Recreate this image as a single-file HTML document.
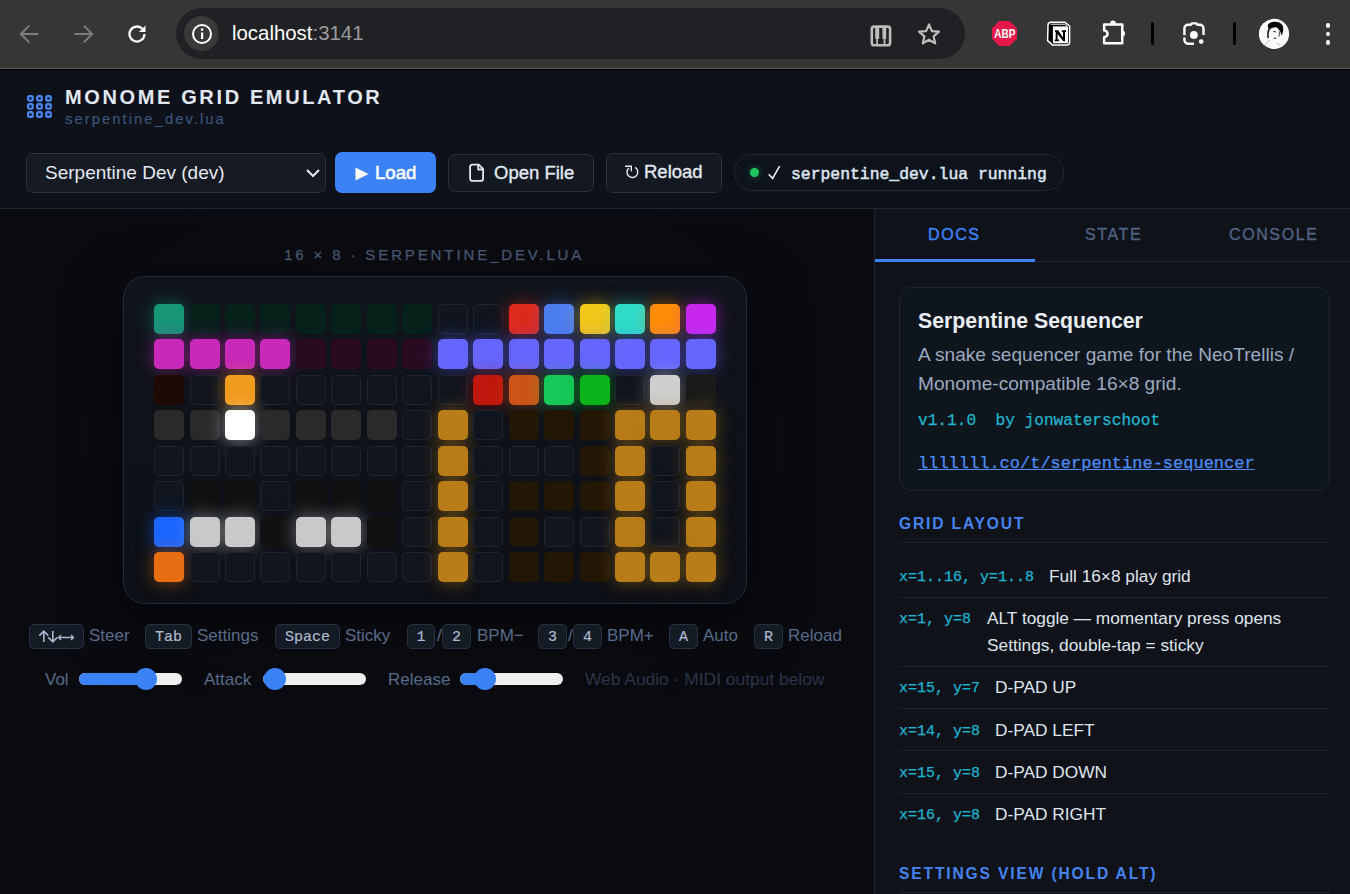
<!DOCTYPE html><html><head><meta charset="utf-8"><title>Monome Grid Emulator</title><style>
*{box-sizing:border-box;margin:0;padding:0}
html,body{width:1350px;height:894px;overflow:hidden;background:#08090d}
body{position:relative;font-family:"Liberation Sans",sans-serif;color:#e2e8f0}
.a{position:absolute}
.mono{font-family:"Liberation Mono",monospace}
.t{position:absolute;white-space:nowrap;line-height:1}
#chrome{position:absolute;left:0;top:0;width:1350px;height:68px;background:#363636}
#chline{position:absolute;left:0;top:68px;width:1350px;height:1px;background:#5e5e5e}
#chline2{position:absolute;left:0;top:69px;width:1350px;height:1px;background:#000}
#omni{position:absolute;left:176px;top:8px;width:789px;height:51px;border-radius:26px;background:#202124}
#header{position:absolute;left:0;top:70px;width:1350px;height:139px;background:#0e111a;border-bottom:1px solid #1d2431}
#left{position:absolute;left:0;top:209px;width:874px;height:685px;background:radial-gradient(ellipse 560px 460px at 434px 230px,#0c0e13 0%,#0a0b10 70%,#090b0f 100%)}
#right{position:absolute;left:874px;top:209px;width:476px;height:685px;background:#0f1219;border-left:1px solid #1d2431}
.btn{position:absolute;border-radius:7px}
.kbd{position:absolute;height:25px;top:624px;background:#151b25;border:1px solid #283142;border-radius:5px;font-family:"Liberation Mono",monospace;color:#adbacf;-webkit-text-stroke:0.2px #adbacf;font-size:15px;line-height:26px;text-align:center}
.klab{position:absolute;top:626px;font-size:17px;line-height:20px;color:#576b8a;white-space:nowrap}
.cell{position:absolute;width:30px;height:30px;border-radius:5px}
.e{background:#10151e;border:1px solid #1d2535}
</style></head><body>
<div id="chrome"></div><div id="chline"></div><div id="chline2"></div>
<svg class="a" style="left:18px;top:22px" width="24" height="24" viewBox="0 0 24 24"><path d="M20.5 12H3.5M11.2 3.6L2.8 12L11.2 20.4" fill="none" stroke="#7c7c7c" stroke-width="2"/></svg>
<svg class="a" style="left:71px;top:22px" width="24" height="24" viewBox="0 0 24 24"><path d="M3.5 12H20.5M12.8 3.6L21.2 12L12.8 20.4" fill="none" stroke="#7c7c7c" stroke-width="2"/></svg>
<svg class="a" style="left:125px;top:22px" width="24" height="24" viewBox="0 0 24 24"><path d="M19.5 12a7.5 7.5 0 1 1-2.2-5.3" fill="none" stroke="#fff" stroke-width="2.3"/><path d="M20.5 3.5v6.5h-6.5z" fill="#fff"/></svg>
<div id="omni"></div>
<div class="a" style="left:184px;top:16px;width:35px;height:35px;border-radius:50%;background:#393939"></div>
<svg class="a" style="left:191px;top:23px" width="22" height="22" viewBox="0 0 22 22"><circle cx="11" cy="11" r="9" fill="none" stroke="#fff" stroke-width="2"/><rect x="10" y="9.5" width="2.2" height="6.5" fill="#fff"/><circle cx="11.1" cy="6.6" r="1.3" fill="#fff"/></svg>
<div class="t" style="left:232px;top:23px;font-size:20.4px;color:#fff">localhost<span style="color:#9b9b9b">:3141</span></div>
<svg class="a" style="left:864px;top:18px" width="34" height="34" viewBox="0 0 34 34"><rect x="7.8" y="8.6" width="18.3" height="18.7" rx="2.4" fill="none" stroke="#bcbcbc" stroke-width="2.6"/><rect x="11.2" y="9" width="4" height="11.8" fill="#bcbcbc"/><rect x="18.4" y="9" width="3.8" height="11.8" fill="#bcbcbc"/><rect x="12.2" y="20" width="1.8" height="7" fill="#bcbcbc"/><rect x="19.6" y="20" width="1.8" height="7" fill="#bcbcbc"/></svg>
<svg class="a" style="left:917px;top:22px" width="24" height="24" viewBox="0 0 24 24"><path d="M12 2.5l2.9 6.6 7.1.6-5.4 4.7 1.6 7-6.2-3.7-6.2 3.7 1.6-7L2 9.7l7.1-.6z" fill="none" stroke="#bdbdbd" stroke-width="2.2" stroke-linejoin="round"/></svg>
<svg class="a" style="left:992px;top:21px" width="25" height="25" viewBox="0 0 25 25"><path d="M7.3 0h10.4l7.3 7.3v10.4l-7.3 7.3H7.3L0 17.7V7.3z" fill="#e5184a"/><text x="2.3" y="17" textLength="21" lengthAdjust="spacingAndGlyphs" font-family="Liberation Sans" font-weight="bold" font-size="12.4" fill="#fff">ABP</text></svg>
<svg class="a" style="left:1046px;top:21px" width="25" height="25" viewBox="0 0 25 25"><path d="M2 4.2Q2 1.2 5 1.2H18.6L23.6 5V21.6Q23.6 23.9 21.3 23.9H6.4L1.6 19.6z" fill="#000" stroke="#fff" stroke-width="1.5" stroke-linejoin="round"/><path d="M6.9 5.4H22.1V22.3H6.9z" fill="#fff"/><path d="M4.6 3.2H18.4L21 5" fill="none" stroke="#fff" stroke-width="1"/><path d="M9 9.3h3.2l4.8 7.2V11h-1.2V9.3h4.2V11h-1v9.3h-1.7L11.6 13v5.6h1.4v1.7H8.7v-1.7h1V11H9z" fill="#000"/></svg>
<svg class="a" style="left:1096px;top:16px" width="34" height="32" viewBox="0 0 34 32"><path d="M8.15 8.55H26.25V27.15H8.15V21.2a3.4 3.4 0 0 0 0-6.8z" fill="none" stroke="#fff" stroke-width="2.5" stroke-linejoin="round"/><path d="M14.2 9v-1.8a2.8 2.8 0 0 1 5.6 0V9z" fill="#fff"/><path d="M26 14.6a3 3 0 0 1 0 6z" fill="#fff"/></svg>
<div class="a" style="left:1151px;top:22px;width:3px;height:23px;border-radius:2px;background:#000"></div>
<svg class="a" style="left:1180px;top:16px" width="28" height="32" viewBox="0 0 28 32"><path d="M4.4 19.3V12.4a3.6 3.6 0 0 1 3.6-3.6H10.6l1.2-1.4h4.6l1.2 1.4h2.3a3.6 3.6 0 0 1 3.6 3.6V19.1" fill="none" stroke="#fff" stroke-width="2.4"/><path d="M4.4 21.6V24.1a3.6 3.6 0 0 0 3.6 3.6H14" fill="none" stroke="#fff" stroke-width="2.4"/><circle cx="13.9" cy="18.9" r="3.9" fill="#fff"/><circle cx="21.2" cy="25.6" r="2.3" fill="#fff"/></svg>
<div class="a" style="left:1233px;top:22px;width:3px;height:23px;border-radius:2px;background:#000"></div>
<svg class="a" style="left:1254px;top:14px" width="40" height="40" viewBox="0 0 40 40"><circle cx="20" cy="19.9" r="15.1" fill="#fbfbfb"/><path d="M13.6 11.5C15.5 6.8 25 6.3 28.3 11c1.8 2.8 1 7.2-.8 10.4-.6-2.4-1.4-4.4-2.6-5.6-.6-1.4-2.4-3-4.2-2.6-2.2.4-4.2 1.4-5.8 2.4z" fill="#0a0a0a"/><path d="M16.5 13.4c-1.8 1.4-2.4 4-2.6 6.5-.1 1.7.2 3.2.4 4.3" fill="none" stroke="#111" stroke-width="1.5"/><path d="M19.3 17.8c.9-.4 1.7-.3 2.4.1" stroke="#222" stroke-width="1.1" fill="none"/><path d="M19.7 24.1c1 .3 1.9.2 2.7-.2" stroke="#333" stroke-width="1.1" fill="none"/><path d="M25.5 17.5c.3 1.8-.1 3.8-.8 5.2" stroke="#222" stroke-width="0.9" fill="none"/><path d="M10.8 30.5c1.8-2 3.6-3.3 5.2-4.1M22.8 28.6c.6 1.4 1.6 2.2 3 2.6" stroke="#999" stroke-width="0.7" fill="none"/></svg>
<div class="a" style="left:1326px;top:23.400000000000002px;width:4.4px;height:4.4px;border-radius:50%;background:#fff"></div>
<div class="a" style="left:1326px;top:31.8px;width:4.4px;height:4.4px;border-radius:50%;background:#fff"></div>
<div class="a" style="left:1326px;top:40.199999999999996px;width:4.4px;height:4.4px;border-radius:50%;background:#fff"></div>
<div id="header"></div>
<svg class="a" style="left:26px;top:94px" width="27" height="25" viewBox="0 0 27 25"><rect x="2.10" y="2.10" width="4.6" height="4.6" rx="1.4" fill="none" stroke="#4b88f5" stroke-width="2.2"/><rect x="11.15" y="2.10" width="4.6" height="4.6" rx="1.4" fill="none" stroke="#4b88f5" stroke-width="2.2"/><rect x="20.20" y="2.10" width="4.6" height="4.6" rx="1.4" fill="none" stroke="#4b88f5" stroke-width="2.2"/><rect x="2.10" y="10.15" width="4.6" height="4.6" rx="1.4" fill="none" stroke="#4b88f5" stroke-width="2.2"/><rect x="11.15" y="10.15" width="4.6" height="4.6" rx="1.4" fill="none" stroke="#4b88f5" stroke-width="2.2"/><rect x="20.20" y="10.15" width="4.6" height="4.6" rx="1.4" fill="none" stroke="#4b88f5" stroke-width="2.2"/><rect x="2.10" y="18.20" width="4.6" height="4.6" rx="1.4" fill="none" stroke="#4b88f5" stroke-width="2.2"/><rect x="11.15" y="18.20" width="4.6" height="4.6" rx="1.4" fill="none" stroke="#4b88f5" stroke-width="2.2"/><rect x="20.20" y="18.20" width="4.6" height="4.6" rx="1.4" fill="none" stroke="#4b88f5" stroke-width="2.2"/></svg>
<div class="t" style="left:65px;top:86.5px;font-size:20px;font-weight:bold;letter-spacing:2.63px;color:#e3e9f2">MONOME GRID EMULATOR</div>
<div class="t" style="left:65px;top:112px;font-size:14.8px;letter-spacing:2.05px;color:#3c5476;-webkit-text-stroke:0.2px #3c5476">serpentine_dev.lua</div>
<div class="a" style="left:26px;top:153px;width:300px;height:40px;border-radius:7px;background:#151a23;border:1px solid #2a3343"></div>
<div class="t" style="left:45px;top:163px;font-size:19px;color:#e3e9f2">Serpentine Dev (dev)</div>
<svg class="a" style="left:305px;top:166px" width="16" height="14" viewBox="0 0 16 14"><path d="M2 4l6 6 6-6" fill="none" stroke="#e3e9f2" stroke-width="2"/></svg>
<div class="btn" style="left:335px;top:152px;width:101px;height:41px;background:#3b82f6"></div>
<svg class="a" style="left:355px;top:167px" width="14" height="14" viewBox="0 0 14 14"><path d="M0.5 0.5L13.5 7 0.5 13.5z" fill="#fff"/></svg>
<div class="t" style="left:375px;top:164px;font-size:18.6px;color:#fff;-webkit-text-stroke:0.55px #fff">Load</div>
<div class="btn" style="left:448px;top:154px;width:146px;height:38px;background:#131821;border:1px solid #283040"></div>
<svg class="a" style="left:462px;top:158px" width="30" height="30" viewBox="0 0 30 30"><path d="M10.3 6.6H16.8L21.1 10.9V20.7a2.2 2.2 0 0 1-2.2 2.2H10.3a2.2 2.2 0 0 1-2.2-2.2V8.8a2.2 2.2 0 0 1 2.2-2.2z M16.2 6.6V11.5H21.1" fill="none" stroke="#dfe6f0" stroke-width="1.8" stroke-linejoin="round"/></svg>
<div class="t" style="left:494px;top:164.2px;font-size:18.5px;color:#e3e9f2;-webkit-text-stroke:0.35px #e3e9f2">Open File</div>
<div class="btn" style="left:606px;top:153px;width:116px;height:40px;background:#131821;border:1px solid #283040"></div>
<svg class="a" style="left:618px;top:158px" width="30" height="30" viewBox="0 0 30 30"><path d="M17.1 9.42A5.4 5.4 0 1 1 10.93 9.96" fill="none" stroke="#e3e9f2" stroke-width="1.4"/><path d="M7 8.3H13.3V13.3" fill="none" stroke="#e3e9f2" stroke-width="1.4"/></svg>
<div class="t" style="left:644px;top:163.2px;font-size:18.5px;color:#e3e9f2;-webkit-text-stroke:0.35px #e3e9f2">Reload</div>
<div class="a" style="left:734px;top:154px;width:330px;height:37px;border-radius:19px;background:#0e131b;border:1px solid #1e2735"></div>
<div class="a" style="left:749.8px;top:168.2px;width:9px;height:9px;border-radius:50%;background:#22c55e;box-shadow:0 0 7px rgba(34,197,94,.45)"></div>
<svg class="a" style="left:760px;top:160px" width="24" height="24" viewBox="0 0 24 24"><path d="M8.6 14.2L12.6 18.4L19.6 6.2" fill="none" stroke="#e6ecf4" stroke-width="1.6"/></svg><div class="t mono" style="left:791px;top:166.8px;font-size:16.4px;-webkit-text-stroke:0.5px #dde5ef;color:#dde5ef">serpentine_dev.lua running</div>
<div id="left"></div>
<div class="t" style="left:284px;top:246.5px;font-size:15px;letter-spacing:2.88px;color:#4b5b76;-webkit-text-stroke:0.25px #4b5b76">16 &#215; 8 &#183; SERPENTINE_DEV.LUA</div>
<div class="a" style="left:123px;top:276px;width:624px;height:328px;border-radius:22px;background:linear-gradient(180deg,#10141b,#0d1016);border:1px solid #212b3b;box-shadow:0 18px 60px rgba(0,0,0,.55)"></div>
<div class="cell" style="left:154.00px;top:304.00px;background:#169577;box-shadow:0 0 18px #1695778c"></div><div class="cell" style="left:190.00px;top:304.00px;background:#06201a"></div><div class="cell" style="left:225.00px;top:304.00px;background:#06201a"></div><div class="cell" style="left:260.00px;top:304.00px;background:#06201a"></div><div class="cell" style="left:296.00px;top:304.00px;background:#06201a"></div><div class="cell" style="left:331.00px;top:304.00px;background:#06201a"></div><div class="cell" style="left:367.00px;top:304.00px;background:#06201a"></div><div class="cell" style="left:402.00px;top:304.00px;background:#06201a"></div><div class="cell e" style="left:438.00px;top:304.00px"></div><div class="cell e" style="left:473.00px;top:304.00px"></div><div class="cell" style="left:509.00px;top:304.00px;background:#de2a1c;box-shadow:0 0 18px #de2a1c8c"></div><div class="cell" style="left:544.00px;top:304.00px;background:#4c7ef0;box-shadow:0 0 18px #4c7ef08c"></div><div class="cell" style="left:580.00px;top:304.00px;background:#f2c81a;box-shadow:0 0 18px #f2c81a8c"></div><div class="cell" style="left:615.00px;top:304.00px;background:#2edcc8;box-shadow:0 0 18px #2edcc88c"></div><div class="cell" style="left:650.00px;top:304.00px;background:#ff8c08;box-shadow:0 0 18px #ff8c088c"></div><div class="cell" style="left:686.00px;top:304.00px;background:#c828ee;box-shadow:0 0 18px #c828ee8c"></div><div class="cell" style="left:154.00px;top:339.00px;background:#c829b8;box-shadow:0 0 18px #c829b88c"></div><div class="cell" style="left:190.00px;top:339.00px;background:#c829b8;box-shadow:0 0 18px #c829b88c"></div><div class="cell" style="left:225.00px;top:339.00px;background:#c829b8;box-shadow:0 0 18px #c829b88c"></div><div class="cell" style="left:260.00px;top:339.00px;background:#c829b8;box-shadow:0 0 18px #c829b88c"></div><div class="cell" style="left:296.00px;top:339.00px;background:#290b21"></div><div class="cell" style="left:331.00px;top:339.00px;background:#290b21"></div><div class="cell" style="left:367.00px;top:339.00px;background:#290b21"></div><div class="cell" style="left:402.00px;top:339.00px;background:#290b21"></div><div class="cell" style="left:438.00px;top:339.00px;background:#6666ff;box-shadow:0 0 18px #6666ff8c"></div><div class="cell" style="left:473.00px;top:339.00px;background:#6666ff;box-shadow:0 0 18px #6666ff8c"></div><div class="cell" style="left:509.00px;top:339.00px;background:#6666ff;box-shadow:0 0 18px #6666ff8c"></div><div class="cell" style="left:544.00px;top:339.00px;background:#6666ff;box-shadow:0 0 18px #6666ff8c"></div><div class="cell" style="left:580.00px;top:339.00px;background:#6666ff;box-shadow:0 0 18px #6666ff8c"></div><div class="cell" style="left:615.00px;top:339.00px;background:#6666ff;box-shadow:0 0 18px #6666ff8c"></div><div class="cell" style="left:650.00px;top:339.00px;background:#6666ff;box-shadow:0 0 18px #6666ff8c"></div><div class="cell" style="left:686.00px;top:339.00px;background:#6666ff;box-shadow:0 0 18px #6666ff8c"></div><div class="cell" style="left:154.00px;top:375.00px;background:#1f0904"></div><div class="cell e" style="left:190.00px;top:375.00px"></div><div class="cell" style="left:225.00px;top:375.00px;background:#f09a1e;box-shadow:0 0 18px #f09a1e8c"></div><div class="cell e" style="left:260.00px;top:375.00px"></div><div class="cell e" style="left:296.00px;top:375.00px"></div><div class="cell e" style="left:331.00px;top:375.00px"></div><div class="cell e" style="left:367.00px;top:375.00px"></div><div class="cell e" style="left:402.00px;top:375.00px"></div><div class="cell e" style="left:438.00px;top:375.00px"></div><div class="cell" style="left:473.00px;top:375.00px;background:#c0180e;box-shadow:0 0 18px #c0180e8c"></div><div class="cell" style="left:509.00px;top:375.00px;background:#cc5418;box-shadow:0 0 18px #cc54188c"></div><div class="cell" style="left:544.00px;top:375.00px;background:#16c858;box-shadow:0 0 18px #16c8588c"></div><div class="cell" style="left:580.00px;top:375.00px;background:#0ab41a;box-shadow:0 0 18px #0ab41a8c"></div><div class="cell e" style="left:615.00px;top:375.00px"></div><div class="cell" style="left:650.00px;top:375.00px;background:#cfcfcf;box-shadow:0 0 18px #cfcfcf8c"></div><div class="cell" style="left:686.00px;top:375.00px;background:#1a1a1a"></div><div class="cell" style="left:154.00px;top:410.00px;background:#2a2a2a"></div><div class="cell" style="left:190.00px;top:410.00px;background:#2a2a2a"></div><div class="cell" style="left:225.00px;top:410.00px;background:#ffffff;box-shadow:0 0 18px #ffffff8c"></div><div class="cell" style="left:260.00px;top:410.00px;background:#2a2a2a"></div><div class="cell" style="left:296.00px;top:410.00px;background:#2a2a2a"></div><div class="cell" style="left:331.00px;top:410.00px;background:#2a2a2a"></div><div class="cell" style="left:367.00px;top:410.00px;background:#2a2a2a"></div><div class="cell e" style="left:402.00px;top:410.00px"></div><div class="cell" style="left:438.00px;top:410.00px;background:#b87c18;box-shadow:0 0 18px #b87c188c"></div><div class="cell e" style="left:473.00px;top:410.00px"></div><div class="cell" style="left:509.00px;top:410.00px;background:#221706"></div><div class="cell" style="left:544.00px;top:410.00px;background:#221706"></div><div class="cell" style="left:580.00px;top:410.00px;background:#221706"></div><div class="cell" style="left:615.00px;top:410.00px;background:#b87c18;box-shadow:0 0 18px #b87c188c"></div><div class="cell" style="left:650.00px;top:410.00px;background:#b87c18;box-shadow:0 0 18px #b87c188c"></div><div class="cell" style="left:686.00px;top:410.00px;background:#b87c18;box-shadow:0 0 18px #b87c188c"></div><div class="cell e" style="left:154.00px;top:446.00px"></div><div class="cell e" style="left:190.00px;top:446.00px"></div><div class="cell e" style="left:225.00px;top:446.00px"></div><div class="cell e" style="left:260.00px;top:446.00px"></div><div class="cell e" style="left:296.00px;top:446.00px"></div><div class="cell e" style="left:331.00px;top:446.00px"></div><div class="cell e" style="left:367.00px;top:446.00px"></div><div class="cell e" style="left:402.00px;top:446.00px"></div><div class="cell" style="left:438.00px;top:446.00px;background:#b87c18;box-shadow:0 0 18px #b87c188c"></div><div class="cell e" style="left:473.00px;top:446.00px"></div><div class="cell e" style="left:509.00px;top:446.00px"></div><div class="cell e" style="left:544.00px;top:446.00px"></div><div class="cell" style="left:580.00px;top:446.00px;background:#221706"></div><div class="cell" style="left:615.00px;top:446.00px;background:#b87c18;box-shadow:0 0 18px #b87c188c"></div><div class="cell e" style="left:650.00px;top:446.00px"></div><div class="cell" style="left:686.00px;top:446.00px;background:#b87c18;box-shadow:0 0 18px #b87c188c"></div><div class="cell e" style="left:154.00px;top:481.00px"></div><div class="cell" style="left:190.00px;top:481.00px;background:#111111"></div><div class="cell" style="left:225.00px;top:481.00px;background:#111111"></div><div class="cell e" style="left:260.00px;top:481.00px"></div><div class="cell" style="left:296.00px;top:481.00px;background:#111111"></div><div class="cell" style="left:331.00px;top:481.00px;background:#111111"></div><div class="cell" style="left:367.00px;top:481.00px;background:#111111"></div><div class="cell e" style="left:402.00px;top:481.00px"></div><div class="cell" style="left:438.00px;top:481.00px;background:#b87c18;box-shadow:0 0 18px #b87c188c"></div><div class="cell e" style="left:473.00px;top:481.00px"></div><div class="cell" style="left:509.00px;top:481.00px;background:#221706"></div><div class="cell" style="left:544.00px;top:481.00px;background:#221706"></div><div class="cell" style="left:580.00px;top:481.00px;background:#221706"></div><div class="cell" style="left:615.00px;top:481.00px;background:#b87c18;box-shadow:0 0 18px #b87c188c"></div><div class="cell e" style="left:650.00px;top:481.00px"></div><div class="cell" style="left:686.00px;top:481.00px;background:#b87c18;box-shadow:0 0 18px #b87c188c"></div><div class="cell" style="left:154.00px;top:517.00px;background:#1a66ff;box-shadow:0 0 18px #1a66ff8c"></div><div class="cell" style="left:190.00px;top:517.00px;background:#c9c9c9;box-shadow:0 0 18px #c9c9c98c"></div><div class="cell" style="left:225.00px;top:517.00px;background:#c9c9c9;box-shadow:0 0 18px #c9c9c98c"></div><div class="cell" style="left:260.00px;top:517.00px;background:#111111"></div><div class="cell" style="left:296.00px;top:517.00px;background:#c9c9c9;box-shadow:0 0 18px #c9c9c98c"></div><div class="cell" style="left:331.00px;top:517.00px;background:#c9c9c9;box-shadow:0 0 18px #c9c9c98c"></div><div class="cell" style="left:367.00px;top:517.00px;background:#111111"></div><div class="cell e" style="left:402.00px;top:517.00px"></div><div class="cell" style="left:438.00px;top:517.00px;background:#b87c18;box-shadow:0 0 18px #b87c188c"></div><div class="cell e" style="left:473.00px;top:517.00px"></div><div class="cell" style="left:509.00px;top:517.00px;background:#221706"></div><div class="cell e" style="left:544.00px;top:517.00px"></div><div class="cell e" style="left:580.00px;top:517.00px"></div><div class="cell" style="left:615.00px;top:517.00px;background:#b87c18;box-shadow:0 0 18px #b87c188c"></div><div class="cell e" style="left:650.00px;top:517.00px"></div><div class="cell" style="left:686.00px;top:517.00px;background:#b87c18;box-shadow:0 0 18px #b87c188c"></div><div class="cell" style="left:154.00px;top:552.00px;background:#e86e14;box-shadow:0 0 18px #e86e148c"></div><div class="cell e" style="left:190.00px;top:552.00px"></div><div class="cell e" style="left:225.00px;top:552.00px"></div><div class="cell e" style="left:260.00px;top:552.00px"></div><div class="cell e" style="left:296.00px;top:552.00px"></div><div class="cell e" style="left:331.00px;top:552.00px"></div><div class="cell e" style="left:367.00px;top:552.00px"></div><div class="cell e" style="left:402.00px;top:552.00px"></div><div class="cell" style="left:438.00px;top:552.00px;background:#b87c18;box-shadow:0 0 18px #b87c188c"></div><div class="cell e" style="left:473.00px;top:552.00px"></div><div class="cell" style="left:509.00px;top:552.00px;background:#221706"></div><div class="cell" style="left:544.00px;top:552.00px;background:#221706"></div><div class="cell" style="left:580.00px;top:552.00px;background:#221706"></div><div class="cell" style="left:615.00px;top:552.00px;background:#b87c18;box-shadow:0 0 18px #b87c188c"></div><div class="cell" style="left:650.00px;top:552.00px;background:#b87c18;box-shadow:0 0 18px #b87c188c"></div><div class="cell" style="left:686.00px;top:552.00px;background:#b87c18;box-shadow:0 0 18px #b87c188c"></div>
<div class="kbd" style="left:29px;width:55px;font-size:15px"></div>
<svg class="a" style="left:26px;top:620px" width="56" height="30" viewBox="0 0 56 30"><g fill="none" stroke="#aab8cd" stroke-width="1.6"><path d="M17.8 11.5V22M13.3 15.6L17.8 11.2L22.3 15.6"/><path d="M26.8 11V21.5M22.3 17.4L26.8 21.8L31.3 17.4"/><path d="M32.5 17.5H47.5M35 15L32.5 17.5L35 20M45 15L47.5 17.5L45 20" stroke-width="1.3"/></g></svg>
<div class="klab" style="left:89px;color:#576b8a">Steer</div>
<div class="kbd" style="left:145px;width:47px;font-size:15px">Tab</div>
<div class="klab" style="left:197px;color:#576b8a">Settings</div>
<div class="kbd" style="left:275px;width:65px;font-size:15px">Space</div>
<div class="klab" style="left:345px;color:#576b8a">Sticky</div>
<div class="kbd" style="left:407px;width:28px;font-size:15px">1</div>
<div class="klab" style="left:437px;color:#576b8a">/</div>
<div class="kbd" style="left:442px;width:29px;font-size:15px">2</div>
<div class="klab" style="left:477px;color:#576b8a">BPM&#8722;</div>
<div class="kbd" style="left:538px;width:29px;font-size:15px">3</div>
<div class="klab" style="left:568px;color:#576b8a">/</div>
<div class="kbd" style="left:573px;width:29px;font-size:15px">4</div>
<div class="klab" style="left:607px;color:#576b8a">BPM+</div>
<div class="kbd" style="left:669px;width:29px;font-size:15px">A</div>
<div class="klab" style="left:703px;color:#576b8a">Auto</div>
<div class="kbd" style="left:754px;width:29px;font-size:15px">R</div>
<div class="klab" style="left:788px;color:#576b8a">Reload</div>
<div class="t" style="left:45px;top:671px;font-size:17px;color:#576b8a">Vol</div>
<div class="a" style="left:79px;top:673px;width:103px;height:12px;border-radius:6px;background:#efefef"></div>
<div class="a" style="left:79px;top:673px;width:67.30000000000001px;height:12px;border-radius:6px 0 0 6px;background:#3b82f6"></div>
<div class="a" style="left:135.3px;top:668px;width:22px;height:22px;border-radius:50%;background:#3b82f6"></div>
<div class="t" style="left:204px;top:671px;font-size:17px;color:#576b8a">Attack</div>
<div class="a" style="left:263px;top:673px;width:103px;height:12px;border-radius:6px;background:#efefef"></div>
<div class="a" style="left:263px;top:673px;width:12.399999999999977px;height:12px;border-radius:6px 0 0 6px;background:#3b82f6"></div>
<div class="a" style="left:264.4px;top:668px;width:22px;height:22px;border-radius:50%;background:#3b82f6"></div>
<div class="t" style="left:388px;top:671px;font-size:17px;color:#576b8a">Release</div>
<div class="a" style="left:460px;top:673px;width:103px;height:12px;border-radius:6px;background:#efefef"></div>
<div class="a" style="left:460px;top:673px;width:24.600000000000023px;height:12px;border-radius:6px 0 0 6px;background:#3b82f6"></div>
<div class="a" style="left:473.6px;top:668px;width:22px;height:22px;border-radius:50%;background:#3b82f6"></div>
<div class="t" style="left:585px;top:671px;font-size:17.4px;color:#2a3547">Web Audio &#183; MIDI output below</div>
<div id="right"></div>
<div class="a" style="left:875px;top:261px;width:475px;height:1px;background:#1d2431"></div>
<div class="a" style="left:875px;top:259px;width:160px;height:3px;background:#3b82f6"></div>
<div class="t" style="left:928px;top:227px;font-size:16px;letter-spacing:1.6px;color:#3b82f6;-webkit-text-stroke:0.4px #3b82f6">DOCS</div>
<div class="t" style="left:1085px;top:227px;font-size:16px;letter-spacing:1.6px;color:#4f6182;-webkit-text-stroke:0.4px #4f6182">STATE</div>
<div class="t" style="left:1229px;top:227px;font-size:16px;letter-spacing:1.6px;color:#4f6182;-webkit-text-stroke:0.4px #4f6182">CONSOLE</div>
<div class="a" style="left:899px;top:287px;width:431px;height:204px;border-radius:12px;background:#0f151d;border:1px solid #1c2432"></div>
<div class="t" style="left:918px;top:310.5px;font-size:21.3px;font-weight:bold;color:#e9eef5">Serpentine Sequencer</div>
<div class="t" style="left:918px;top:345px;font-size:19.1px;color:#9aa9c0">A snake sequencer game for the NeoTrellis /</div>
<div class="t" style="left:918px;top:374px;font-size:19.1px;color:#9aa9c0">Monome-compatible 16&#215;8 grid.</div>
<div class="t mono" style="left:918px;top:413px;font-size:16.15px;color:#22b5cc;-webkit-text-stroke:0.25px #22b5cc">v1.1.0&nbsp;&nbsp;by jonwaterschoot</div>
<div class="t mono" style="left:918px;top:455px;font-size:17px;color:#4d8cf5;-webkit-text-stroke:0.25px #4d8cf5;text-decoration:underline">lllllll.co/t/serpentine-sequencer</div>
<div class="t" style="left:899px;top:516px;font-size:15.6px;font-weight:bold;letter-spacing:1.85px;color:#4584f0">GRID LAYOUT</div>
<div class="a" style="left:899px;top:542px;width:431px;height:1px;background:#1c2330"></div>
<div class="t mono" style="left:899px;top:570px;font-size:15px;color:#1cb5d1;-webkit-text-stroke:0.25px #1cb5d1">x=1..16, y=1..8</div>
<div class="t" style="left:1049px;top:567.7px;font-size:17.3px;color:#dfe5ee">Full 16&#215;8 play grid</div>
<div class="a" style="left:899px;top:597px;width:431px;height:1px;background:#1c2330"></div>
<div class="t mono" style="left:899px;top:612px;font-size:15px;color:#1cb5d1;-webkit-text-stroke:0.25px #1cb5d1">x=1, y=8</div>
<div class="t" style="left:987px;top:609.7px;font-size:17.3px;color:#dfe5ee">ALT toggle &#8212; momentary press opens</div>
<div class="t" style="left:987px;top:636.7px;font-size:17.3px;color:#dfe5ee">Settings, double-tap = sticky</div>
<div class="a" style="left:899px;top:666px;width:431px;height:1px;background:#1c2330"></div>
<div class="t mono" style="left:899px;top:681px;font-size:15px;color:#1cb5d1;-webkit-text-stroke:0.25px #1cb5d1">x=15, y=7</div>
<div class="t" style="left:995px;top:678.7px;font-size:17.3px;color:#dfe5ee">D-PAD UP</div>
<div class="a" style="left:899px;top:708px;width:431px;height:1px;background:#1c2330"></div>
<div class="t mono" style="left:899px;top:724px;font-size:15px;color:#1cb5d1;-webkit-text-stroke:0.25px #1cb5d1">x=14, y=8</div>
<div class="t" style="left:995px;top:721.7px;font-size:17.3px;color:#dfe5ee">D-PAD LEFT</div>
<div class="a" style="left:899px;top:750px;width:431px;height:1px;background:#1c2330"></div>
<div class="t mono" style="left:899px;top:766px;font-size:15px;color:#1cb5d1;-webkit-text-stroke:0.25px #1cb5d1">x=15, y=8</div>
<div class="t" style="left:995px;top:763.7px;font-size:17.3px;color:#dfe5ee">D-PAD DOWN</div>
<div class="a" style="left:899px;top:793px;width:431px;height:1px;background:#1c2330"></div>
<div class="t mono" style="left:899px;top:808px;font-size:15px;color:#1cb5d1;-webkit-text-stroke:0.25px #1cb5d1">x=16, y=8</div>
<div class="t" style="left:995px;top:805.7px;font-size:17.3px;color:#dfe5ee">D-PAD RIGHT</div>
<div class="t" style="left:899px;top:866px;font-size:15.6px;font-weight:bold;letter-spacing:1.85px;color:#4584f0">SETTINGS VIEW (HOLD ALT)</div>
<div class="a" style="left:899px;top:892px;width:431px;height:1px;background:#1c2330"></div>
</body></html>
